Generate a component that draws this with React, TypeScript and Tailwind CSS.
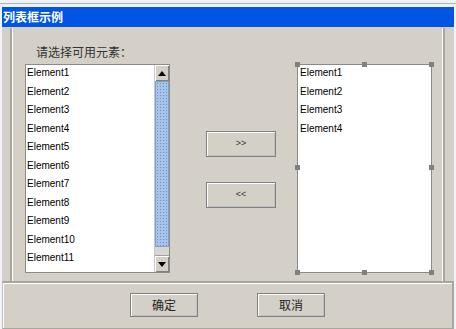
import React from "react";

const LEFT = Array.from({ length: 11 }, (_, i) => `Element${i + 1}`);
const RIGHT = ["Element1", "Element2", "Element3", "Element4"];

const cjk = "font-['Noto_Sans_CJK_SC','Noto_Sans',sans-serif]";
const latin = "font-['Liberation_Sans',Arial,sans-serif]";

function Item({ label }: { label: string }) {
  return (
    <div className={`h-[18.5px] shrink-0 pl-[1px] text-[10px] leading-[16px] text-black ${latin}`}>
      {label}
    </div>
  );
}

function Arrow({ up }: { up?: boolean }) {
  return (
    <div className="flex h-[16px] w-full items-center justify-center bg-[#d4d0c8] shadow-[inset_1px_1px_0_#fff,inset_-1px_-1px_0_#808080]">
      <svg width="8" height="5" viewBox="0 0 8 5">
        {up ? <polygon points="0,5 8,5 4,0" fill="#000" /> : <polygon points="0,0 8,0 4,5" fill="#000" />}
      </svg>
    </div>
  );
}

function Handle({ pos }: { pos: string }) {
  return <div className={`absolute h-[5px] w-[5px] bg-[#808080] ${pos}`} />;
}

function Btn({ children, cls }: { children: React.ReactNode; cls: string }) {
  return (
    <div
      className={`flex items-center justify-center border border-[#808080] bg-[#d4d0c8] shadow-[inset_1px_1px_0_#fff,inset_-1px_-1px_0_#c0c0c0] ${cls}`}
    >
      {children}
    </div>
  );
}

export default function App() {
  return (
    <div className="h-[329px] w-[456px] overflow-hidden bg-[#f1f2f4]">
      <div className="h-[3px]" />
      <div className="h-px bg-[#a6b6c8]" />
      <div className="h-[3px]" />
      <div className="mx-[2px] flex h-[322px] flex-col bg-[#d4d0c8]">
        <div className={`flex h-[20px] shrink-0 items-center bg-[#0056e2] pl-[1px] text-[12px] font-bold text-white ${cjk}`}>
          列表框示例
        </div>

        <div className="ml-[8px] mt-[1px] flex h-[253px] w-[435px] shrink-0 flex-col border-2 border-t-0 border-b-0 border-l-[#a8a6a0] border-r-[#a8a6a0] bg-[#d4d0c8] shadow-[inset_1px_0_0_#fff,inset_-1px_0_0_#fff]">
          <div className={`ml-[24px] mt-[17px] h-[14px] text-[12px] leading-[14px] text-[#333] ${cjk}`}>请选择可用元素：</div>

          <div className="mt-[5px] flex">
            <div className="ml-[13px] flex h-[209px] w-[145px] border border-[#8a8a8a] bg-white">
              <div className="flex flex-1 flex-col overflow-hidden">
                {LEFT.map((l) => (
                  <Item key={l} label={l} />
                ))}
              </div>
              <div className="flex w-[15px] flex-col border-l border-[#c8c8c8] bg-[#d4d0c8]">
                <Arrow up />
                <div className="h-[166px] border border-[#7f9fcc] bg-[#a6c3ea] bg-[radial-gradient(circle,#6f8fbd_0.7px,transparent_0.9px)] bg-[length:3px_3px]" />
                <div className="flex-1 border-b border-[#a0a0a0] bg-[#d8d6d0]" />
                <Arrow />
              </div>
            </div>

            <div className="ml-[36px] mr-[21px] flex w-[70px] flex-col">
              <Btn cls="mt-[67px] h-[26px] w-[70px]">
                <span className={`text-[9px] text-[#333] ${latin}`}>&gt;&gt;</span>
              </Btn>
              <Btn cls="mt-[25px] h-[26px] w-[70px]">
                <span className={`text-[9px] text-[#333] ${latin}`}>&lt;&lt;</span>
              </Btn>
            </div>

            <div className="relative h-[209px] w-[135px] border border-[#8a8a8a] bg-white">
              <div className="flex flex-col pl-[1px]">
                {RIGHT.map((l) => (
                  <Item key={l} label={l} />
                ))}
              </div>
              <Handle pos="-left-[3px] -top-[3px]" />
              <Handle pos="left-[64px] -top-[3px]" />
              <Handle pos="-right-[3px] -top-[3px]" />
              <Handle pos="-left-[3px] top-[100px]" />
              <Handle pos="-right-[3px] top-[100px]" />
              <Handle pos="-left-[3px] -bottom-[3px]" />
              <Handle pos="left-[64px] -bottom-[3px]" />
              <Handle pos="-right-[3px] -bottom-[3px]" />
            </div>
          </div>
        </div>

        <div className="flex flex-1 justify-center gap-[59px] border-t-2 border-r-2 border-b border-l border-t-[#a8a6a0] border-r-[#a8a6a0] border-b-[#a8a6a0] border-l-[#c0c0c0] pt-[10px] shadow-[inset_1px_1px_0_#fff]">
          <Btn cls="h-[24px] w-[68px]">
            <span className={`text-[12px] text-[#222] ${cjk}`}>确定</span>
          </Btn>
          <Btn cls="h-[24px] w-[68px]">
            <span className={`text-[12px] text-[#222] ${cjk}`}>取消</span>
          </Btn>
        </div>
      </div>
    </div>
  );
}
